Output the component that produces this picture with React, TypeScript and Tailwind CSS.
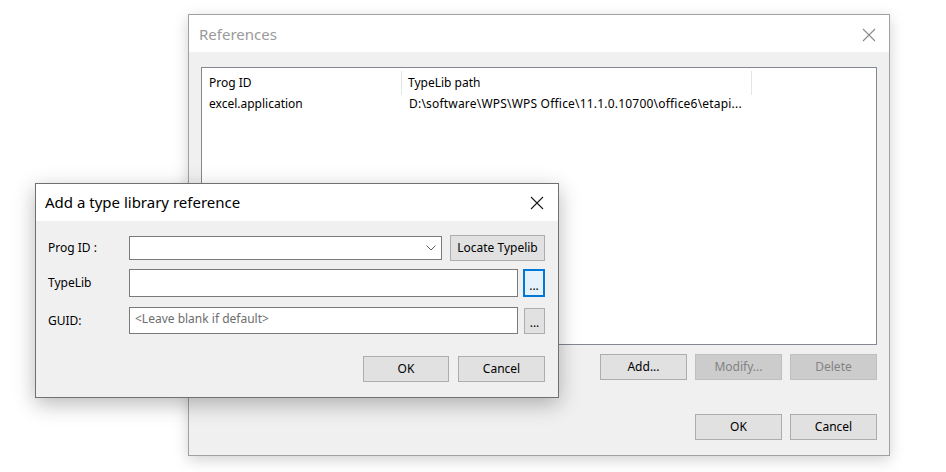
import React from "react";

const font = { fontFamily: '"Noto Sans", "Open Sans", sans-serif' };

const CloseIcon = ({ color }: { color: string }) => (
  <svg width="14" height="14" viewBox="0 0 14 14" aria-hidden="true">
    <path d="M1 1L13 13M13 1L1 13" stroke={color} strokeWidth="1.1" fill="none" />
  </svg>
);

const ChevronDown = () => (
  <svg width="10" height="6" viewBox="0 0 10 6" aria-hidden="true">
    <path d="M0.5 0.5L5 5L9.5 0.5" stroke="#606060" strokeWidth="1" fill="none" />
  </svg>
);

const WinButton = ({
  label,
  disabled,
  className = "",
}: {
  label: string;
  disabled?: boolean;
  className?: string;
}) => (
  <button
    type="button"
    className={`h-[26px] shrink-0 border text-[12px] leading-none ${
      disabled
        ? "bg-[#cccccc] border-[#bfbfbf] text-[#838383]"
        : "bg-[#e1e1e1] border-[#adadad] text-black"
    } ${className}`}
  >
    {label}
  </button>
);

const ReferencesDialog = () => (
  <div className="absolute left-[188px] top-[14px] w-[702px] h-[442px] border border-[#a0a0a0] bg-[#f0f0f0] shadow-[0_4px_14px_rgba(0,0,0,0.18)] flex flex-col">
    <div className="h-[37px] bg-white flex items-center justify-between pl-[10px] pr-[13px] pt-[2px]">
      <span className="text-[15px] text-[#9a9a9a]">References</span>
      <CloseIcon color="#8a8a8a" />
    </div>
    <div className="flex-1 flex flex-col px-[12px] pt-[15px]">
      <div className="h-[278px] w-[676px] border border-[#828790] bg-white text-[12px] text-black">
        <div className="flex h-[28px] items-center pt-[1px]">
          <div className="w-[200px] pl-[7px] border-r border-[#e5e5e5] h-[24px] flex items-center">Prog ID</div>
          <div className="w-[350px] pl-[6px] border-r border-[#e5e5e5] h-[24px] flex items-center">TypeLib path</div>
        </div>
        <div className="flex h-[16px] items-center">
          <div className="w-[200px] pl-[7px]">excel.application</div>
          <div className="pl-[7px] whitespace-nowrap tracking-[0.2px]">D:\software\WPS\WPS Office\11.1.0.10700\office6\etapi...</div>
        </div>
      </div>
      <div className="flex justify-end gap-[8px] mt-[9px]">
        <WinButton label="Add..." className="w-[87px]" />
        <WinButton label="Modify..." disabled className="w-[87px]" />
        <WinButton label="Delete" disabled className="w-[87px]" />
      </div>
      <div className="flex justify-end gap-[8px] mt-[34px]">
        <WinButton label="OK" className="w-[87px]" />
        <WinButton label="Cancel" className="w-[87px]" />
      </div>
    </div>
  </div>
);

const AddTypeLibDialog = () => (
  <div className="absolute left-[35px] top-[183px] w-[524px] h-[215px] border border-[#707070] bg-[#f0f0f0] shadow-[0_6px_20px_rgba(0,0,0,0.28)] flex flex-col">
    <div className="h-[37px] bg-white flex items-center justify-between pl-[9px] pr-[14px]">
      <span className="text-[15px] text-black">Add a type library reference</span>
      <CloseIcon color="#1a1a1a" />
    </div>
    <div className="flex flex-col pl-[12px] pr-[13px] pt-[14px] text-[12px] text-black">
      <div className="flex items-center h-[26px]">
        <span className="w-[81px] shrink-0">Prog ID :</span>
        <div className="w-[313px] shrink-0 h-[24px] border border-[#7a7a7a] bg-white flex items-center justify-end pr-[5px]">
          <ChevronDown />
        </div>
        <button
          type="button"
          className="ml-[8px] w-[95px] shrink-0 h-[26px] border border-[#adadad] bg-[#e1e1e1] text-[12px]"
        >
          Locate Typelib
        </button>
      </div>
      <div className="flex items-center h-[28px] mt-[8px]">
        <span className="w-[81px] shrink-0">TypeLib</span>
        <div className="w-[389px] shrink-0 h-[28px] border border-[#7a7a7a] bg-white" />
        <button
          type="button"
          className="ml-[5px] w-[22px] shrink-0 h-[28px] border-2 border-[#0078d7] bg-[#e5f1fb] text-[12px] leading-none pt-[6px]"
        >
          ...
        </button>
      </div>
      <div className="flex items-center h-[27px] mt-[10px]">
        <span className="w-[81px] shrink-0">GUID:</span>
        <div className="w-[389px] shrink-0 h-[27px] border border-[#7a7a7a] bg-white flex items-start pl-[5px] pt-[2px] text-[#6d6d6d]">
          &lt;Leave blank if default&gt;
        </div>
        <button
          type="button"
          className="ml-[6px] w-[21px] shrink-0 h-[26px] border border-[#adadad] bg-[#e1e1e1] text-[12px] leading-none pt-[5px]"
        >
          ...
        </button>
      </div>
      <div className="flex justify-end gap-[9px] mt-[22px]">
        <WinButton label="OK" className="w-[86px]" />
        <WinButton label="Cancel" className="w-[87px]" />
      </div>
    </div>
  </div>
);

export default function App() {
  return (
    <div className="relative w-[946px] h-[472px] bg-white overflow-hidden" style={font}>
      <ReferencesDialog />
      <AddTypeLibDialog />
    </div>
  );
}
